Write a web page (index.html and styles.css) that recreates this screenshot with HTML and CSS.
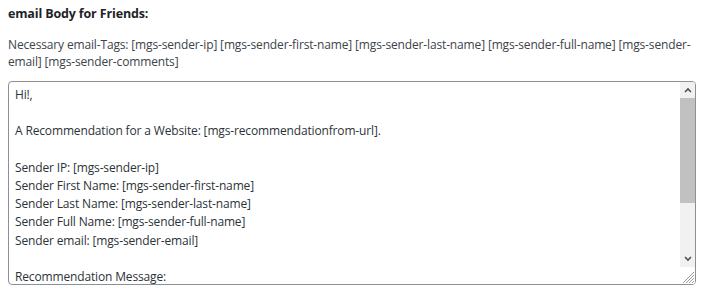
FILE: index.html
```html
<!DOCTYPE html>
<html lang="en">
<head>
    <meta charset="UTF-8">
    <title>email Body for Friends</title>
    <link rel="stylesheet" href="styles.css">
</head>
<body>
    <section class="mail-settings">
        <h2 class="section-title">email Body for Friends:</h2>
        <p class="tags-note">Necessary email-Tags: [mgs-sender-ip] [mgs-sender-first-name] [mgs-sender-last-name] [mgs-sender-full-name] [mgs-sender-email] [mgs-sender-comments]</p>

        <div class="body-field">
            <div class="body-text">Hi!,

A Recommendation for a Website: [mgs-recommendationfrom-url].

Sender IP: [mgs-sender-ip]
Sender First Name: [mgs-sender-first-name]
Sender Last Name: [mgs-sender-last-name]
Sender Full Name: [mgs-sender-full-name]
Sender email: [mgs-sender-email]

Recommendation Message:</div>
            <div class="scrollbar">
                <div class="scroll-btn">
                    <svg width="8" height="6" viewBox="0 0 8 6"><path d="M1 5 L4 2 L7 5" fill="none" stroke="#505050" stroke-width="1.6"/></svg>
                </div>
                <div class="scroll-thumb"></div>
                <div class="scroll-track"></div>
                <div class="scroll-btn">
                    <svg width="8" height="6" viewBox="0 0 8 6"><path d="M1 1 L4 4 L7 1" fill="none" stroke="#505050" stroke-width="1.6"/></svg>
                </div>
                <div class="resize-grip">
                    <svg width="12" height="12" viewBox="0 0 12 12"><path d="M11 3 L3 11 M11 6 L6 11 M11 9 L9 11 M11 0 L0 11" stroke="#9a9a9a" stroke-width="1"/></svg>
                </div>
            </div>
        </div>
    </section>
</body>
</html>
```

FILE: styles.css
```css
* {
    margin: 0;
    padding: 0;
    box-sizing: border-box;
}

body {
    background: #fff;
    color: #3c434a;
    font-family: 'Open Sans', sans-serif;
    font-size: 12px;
    letter-spacing: -0.15px;
}

.mail-settings {
    padding: 5px 0 0 8px;
}

.section-title {
    font-size: 12.5px;
    font-weight: 700;
    color: #1d2327;
    line-height: 18px;
    margin-bottom: 13px;
}

.tags-note {
    line-height: 17px;
    margin-bottom: 11px;
}

.body-field {
    display: flex;
    width: 688px;
    height: 204px;
    border: 1px solid #8c8f94;
    border-radius: 4px;
    overflow: hidden;
}

.body-text {
    flex: 1;
    padding: 4px 6px;
    line-height: 18.2px;
    color: #2c3338;
    white-space: pre-line;
    overflow: hidden;
}

.scrollbar {
    width: 15px;
    display: flex;
    flex-direction: column;
    background: #f1f1f1;
}

.scroll-btn {
    height: 16px;
    display: flex;
    align-items: center;
    justify-content: center;
}

.scroll-thumb {
    height: 105px;
    background: #c1c1c1;
}

.scroll-track {
    flex: 1;
}

.resize-grip {
    height: 17px;
    background: #fff;
    display: flex;
    align-items: flex-end;
    justify-content: flex-end;
}
```
